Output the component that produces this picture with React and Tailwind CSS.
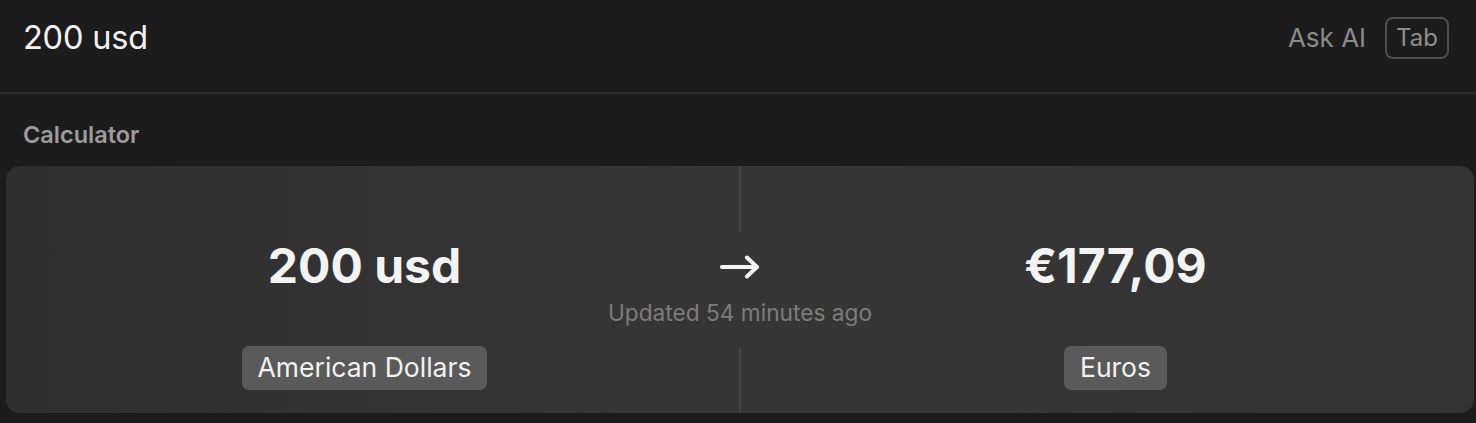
export default function App() {
  return (
    <div className="w-[1476px] h-[423px] bg-[#1c1c1c] font-['Inter',sans-serif] flex flex-col overflow-hidden">
      {/* Search bar */}
      <div className="h-[94px] shrink-0 flex items-center justify-between pl-[23px] pr-[27px] pb-[16px] border-b-2 border-[#2c2c2c]">
        <span className="text-[32.5px] text-[#f2f2f2] tracking-[-0.2px] leading-none">200 usd</span>
        <div className="flex items-center gap-[19px]">
          <span className="text-[26px] text-[#8a8a8a] leading-none">Ask AI</span>
          <span className="h-[42px] px-[9px] flex items-center border-2 border-[#4e4e4e] rounded-[8px] text-[24px] text-[#8f8f8f]">
            Tab
          </span>
        </div>
      </div>

      {/* Section */}
      <div className="pt-[29px] pl-[23px] h-[72px] shrink-0">
        <span className="block text-[23.5px] leading-none font-semibold text-[#9b9b9b]">Calculator</span>
      </div>

      <div className="ml-[6px] mr-[2px] h-[247px] rounded-[14px] bg-gradient-to-r from-[#2f2f2f] via-[#363636] to-[#333333] flex">
        <div className="flex-1 flex flex-col items-center pr-[16px] pt-[76px]">
          <span className="text-[48px] font-bold text-[#f3f3f3] leading-none">200 usd</span>
          <span className="mt-[56px] h-[44px] px-[16px] flex items-center rounded-[7px] bg-[#5a5a5a] text-[26.5px] text-[#f2f2f2]">
            American Dollars
          </span>
        </div>

        <div className="w-[2px] flex flex-col items-center">
          <div className="w-[2px] h-[66px] bg-[#454545]" />
          <div className="relative flex-1 w-0">
            <div className="absolute left-1/2 top-[23px] -translate-x-1/2 flex flex-col items-center whitespace-nowrap">
              <svg width="42" height="24" viewBox="0 0 42 24" fill="none" stroke="#f4f4f4" strokeWidth="4" strokeLinecap="round" strokeLinejoin="round">
                <path d="M3 12h35" />
                <path d="M28 2.5l10 9.5-10 9.5" />
              </svg>
              <span className="mt-[23px] text-[22.7px] leading-none text-[#7c7c7c]">Updated 54 minutes ago</span>
            </div>
          </div>
          <div className="w-[2px] h-[65px] bg-[#454545]" />
        </div>

        <div className="flex-1 flex flex-col items-center pl-[16px] pt-[76px]">
          <span className="text-[48px] font-bold text-[#f3f3f3] leading-none">€177,09</span>
          <span className="mt-[56px] h-[44px] px-[16px] flex items-center rounded-[7px] bg-[#5a5a5a] text-[26.5px] text-[#f2f2f2]">
            Euros
          </span>
        </div>
      </div>
    </div>
  );
}
